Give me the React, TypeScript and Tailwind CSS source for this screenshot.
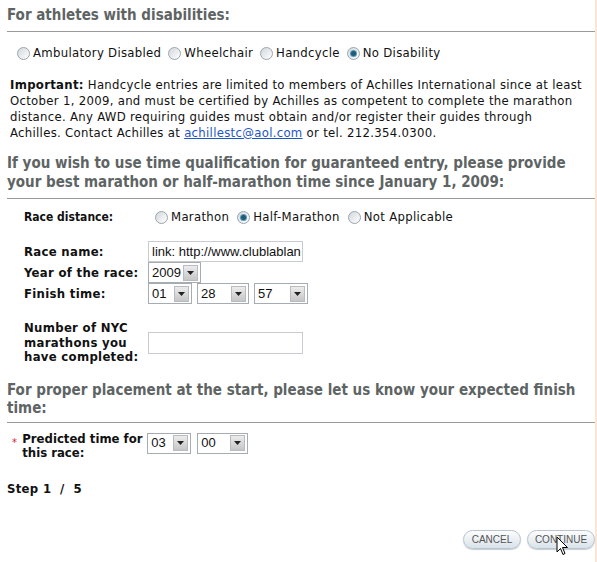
import React from 'react';

function Radio({ checked = false }: { checked?: boolean }) {
  return (
    <span className="relative inline-flex h-[13px] w-[13px] shrink-0 items-center justify-center rounded-full border border-[#9aa5ae] bg-gradient-to-br from-[#d3d8dc] to-[#ffffff]">
      {checked && <span className="h-[5px] w-[5px] rounded-full bg-[#1f5c7a] shadow-[0_0_0_1px_#5a9bb8]" />}
    </span>
  );
}

function RadioOption({ label, checked }: { label: string; checked?: boolean }) {
  return (
    <span className="flex items-center gap-[3px]">
      <Radio checked={checked} />
      <span>{label}</span>
    </span>
  );
}

function Select({ value, width }: { value: string; width: number }) {
  return (
    <div
      className="flex h-[21px] items-center justify-between border border-[#a5acb2] bg-white pl-[3px] pr-[2px] font-['Liberation_Sans'] text-[13px] tracking-normal text-[#111]"
      style={{ width }}
    >
      <span>{value}</span>
      <span className="flex h-[16px] w-[15px] items-center justify-center border border-[#b8bcc0] bg-gradient-to-b from-[#ececec] to-[#c6c6c6]">
        <svg width="7" height="4" viewBox="0 0 7 4">
          <polygon points="0,0 7,0 3.5,4" fill="#222" />
        </svg>
      </span>
    </div>
  );
}

function Heading({ children, lh = 'leading-[19px]' }: { children: React.ReactNode; lh?: string }) {
  return <h2 className={`pl-[7px] text-[15px] font-bold tracking-normal text-[#5e6464] ${lh}`}>{children}</h2>;
}

export default function App() {
  return (
    <div className="relative h-[562px] w-[597px] overflow-hidden bg-white font-['DejaVu_Sans_Condensed','DejaVu_Sans',sans-serif] text-[13px] tracking-[0.3px] text-[#111]">
      <div className="absolute right-0 top-0 h-full w-[2px] bg-[#fbe6d4]" />

      <div className="pt-[6px]">
        <Heading>For athletes with disabilities:</Heading>
      </div>
      <div className="mt-[6px] ml-[7px] h-px bg-[#9a9a9a]" />

      <div className="mt-[12px] flex h-[18px] items-center gap-[7px] pl-[17px]">
        <RadioOption label="Ambulatory Disabled" />
        <RadioOption label="Wheelchair" />
        <RadioOption label="Handcycle" />
        <RadioOption label="No Disability" checked />
      </div>

      <p className="mt-[15px] pl-[10px] pr-[10px] leading-[16px]">
        <b>Important:</b> Handcycle entries are limited to members of Achilles International since at least October 1, 2009, and
        must be certified by Achilles as competent to complete the marathon distance. Any AWD requiring guides must obtain
        and/or register their guides through Achilles. Contact Achilles at{' '}
        <a className="text-[#1f55c4] underline">achillestc@aol.com</a> or tel. 212.354.0300.
      </p>

      <div className="mt-[13px]">
        <Heading>
          If you wish to use time qualification for guaranteed entry, please provide your best marathon or half-marathon
          time since January 1, 2009:
        </Heading>
      </div>
      <div className="mt-[6px] ml-[7px] h-px bg-[#9a9a9a]" />

      <div className="mt-[9px] flex h-[18px] items-center pl-[24px]">
        <span className="w-[131px] text-[12px] font-bold tracking-normal">Race distance:</span>
        <span className="flex items-center gap-[8px]">
          <RadioOption label="Marathon" />
          <RadioOption label="Half-Marathon" checked />
          <RadioOption label="Not Applicable" />
        </span>
      </div>

      <div className="mt-[15px] grid grid-cols-[124px_auto] items-center pl-[24px]">
        <span className="font-bold">Race name:</span>
        <div className="flex h-[21px] w-[155px] items-center overflow-hidden whitespace-nowrap border border-[#c8ccd0] pl-[3px] font-['Liberation_Sans'] text-[13px] tracking-normal">
          link: http://www.clublablan
        </div>
        <span className="font-bold">Year of the race:</span>
        <Select value="2009" width={53} />
        <span className="font-bold">Finish time:</span>
        <div className="flex gap-[5px]">
          <Select value="01" width={44} />
          <Select value="28" width={52} />
          <Select value="57" width={54} />
        </div>
      </div>

      <div className="mt-[17px] grid grid-cols-[124px_auto] items-center pl-[24px]">
        <span className="font-bold leading-[14.5px]">
          Number of NYC
          <br />
          marathons you
          <br />
          have completed:
        </span>
        <div className="h-[22px] w-[155px] border border-[#c8ccd0]" />
      </div>

      <div className="mt-[16px]">
        <Heading lh="leading-[18px]">
          For proper placement at the start, please let us know your expected finish time:
        </Heading>
      </div>
      <div className="mt-[5px] ml-[7px] h-px bg-[#9a9a9a]" />

      <div className="mt-[9px] flex items-start pl-[12px]">
        <span className="mr-[5px] pt-[6px] text-[11px] leading-[10px] text-[#d02030]">*</span>
        <span className="w-[123px] whitespace-nowrap font-bold leading-[14px] tracking-normal">
          Predicted time for
          <br />
          this race:
        </span>
        <div className="ml-[2px] flex gap-[6px] pt-[1px]">
          <Select value="03" width={44} />
          <Select value="00" width={51} />
        </div>
      </div>

      <div className="mt-[19px] pl-[7px] font-bold">Step 1&nbsp; /&nbsp; 5</div>

      <div className="absolute right-[2px] top-[530px] flex gap-[6px] font-['Liberation_Sans'] text-[10px] tracking-normal text-[#555]">
        <button className="h-[19px] w-[58px] rounded-full border border-[#b9c4cf] bg-gradient-to-b from-[#fdfdfd] to-[#d9e2ea] shadow-[0_1px_1px_#c5cdd5]">
          CANCEL
        </button>
        <button className="h-[19px] w-[68px] rounded-full border border-[#b9c4cf] bg-gradient-to-b from-[#fdfdfd] to-[#d9e2ea] shadow-[0_1px_1px_#c5cdd5]">
          CONTINUE
        </button>
      </div>

      <svg className="absolute left-[556px] top-[536px]" width="13" height="20" viewBox="0 0 13 20">
        <path d="M1 1 L1 16 L4.5 12.5 L7 18.5 L9 17.5 L6.5 11.5 L11.5 11.5 Z" fill="#fff" stroke="#000" strokeWidth="1" />
      </svg>
    </div>
  );
}
